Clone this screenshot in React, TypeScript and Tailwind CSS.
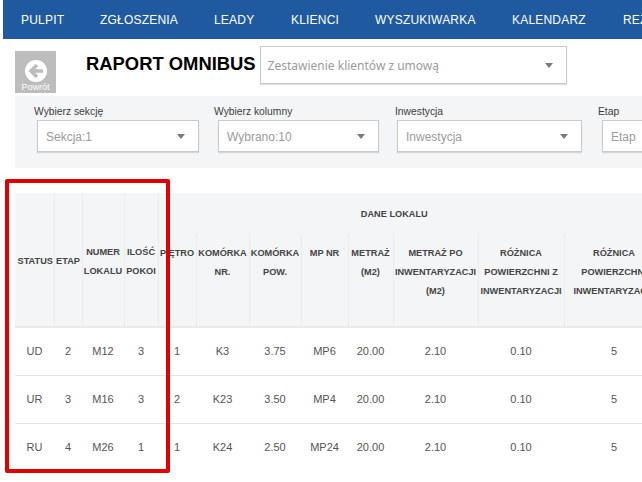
const navItems = [
  { label: "PULPIT", width: "w-[79px]" },
  { label: "ZGŁOSZENIA", width: "w-[114px]" },
  { label: "LEADY", width: "w-[77px]" },
  { label: "KLIENCI", width: "w-[84px]" },
  { label: "WYSZUKIWARKA", width: "w-[137px]" },
  { label: "KALENDARZ", width: "w-[111px]" },
  { label: "REZERWACJE", width: "w-[100px]" },
];

const columns = [39, 28, 42, 34, 38, 53, 52, 47, 45, 85, 86, 100];

const subHeaders = [
  ["PIĘTRO"],
  ["KOMÓRKA", "NR."],
  ["KOMÓRKA", "POW."],
  ["MP NR"],
  ["METRAŻ", "(M2)"],
  ["METRAŻ PO", "INWENTARYZACJI", "(M2)"],
  ["RÓŻNICA", "POWIERZCHNI Z", "INWENTARYZACJI"],
  ["RÓŻNICA", "POWIERZCHNI", "INWENTARYZACJI"],
];

const rows = [
  ["UD", "2", "M12", "3", "1", "K3", "3.75", "MP6", "20.00", "2.10", "0.10", "5"],
  ["UR", "3", "M16", "3", "2", "K23", "3.50", "MP4", "20.00", "2.10", "0.10", "5"],
  ["RU", "4", "M26", "1", "1", "K24", "2.50", "MP24", "20.00", "2.10", "0.10", "5"],
];

function Caret() {
  return (
    <svg width="8" height="5" viewBox="0 0 8 5" className="shrink-0">
      <path d="M0 0H8L4 5Z" fill="#7a7a7a" />
    </svg>
  );
}

function SelectBox({ text, className }: { text: string; className: string }) {
  return (
    <div className={`flex items-center justify-between border border-[#c9c9c9] bg-white pl-[8px] pr-[13px] pt-[1px] text-[12px] text-[#9b9b9b] shadow-[0_1px_1px_rgba(0,0,0,0.12)] ${className}`}>
      <span className="whitespace-nowrap">{text}</span>
      <Caret />
    </div>
  );
}

function Filter({ label, text, width, offset, box }: { label: string; text: string; width: string; offset: string; box: string }) {
  return (
    <div className={`shrink-0 ${width}`}>
      <div className="h-[16px] text-[10.3px] leading-[15px] text-[#3d3d3d]">{label}</div>
      <SelectBox text={text} className={`h-[32px] ${offset} ${box}`} />
    </div>
  );
}

export default function App() {
  return (
    <div className="relative h-[482px] w-[642px] overflow-hidden bg-white font-['Liberation_Sans',sans-serif]">
      {/* Top menu */}
      <nav className="ml-[3px] flex h-[39px] items-center whitespace-nowrap bg-[#1f5aa0] pl-[18px] text-[12px] tracking-[0.2px] text-white">
        {navItems.map((item) => (
          <span key={item.label} className={`shrink-0 ${item.width}`}>
            {item.label}
          </span>
        ))}
      </nav>

      {/* Title row */}
      <div className="flex h-[57px] pl-[15px]">
        <div className="mt-[12px] flex h-[42px] w-[41px] flex-col items-center bg-[#bdbdbd]">
          <svg width="22" height="22" viewBox="0 0 22 22" className="mt-[9px] shrink-0">
            <circle cx="11" cy="11" r="11" fill="#fff" />
            <path d="M18 11H7M12 5L6 11l6 6" fill="none" stroke="#bdbdbd" strokeWidth="3.6" />
          </svg>
          <span className="text-[9px] leading-[10px] text-white">Powrót</span>
        </div>
        <h1 className="ml-[30px] mt-[14px] whitespace-nowrap text-[18.4px] font-bold leading-[22px] text-black">RAPORT OMNIBUS</h1>
        <div className="ml-[4px] mt-[7px] flex h-[38px] w-[307px] items-center justify-between border border-[#c9c9c9] bg-white pl-[7px] pr-[13px] pt-[1px] font-['Noto_Sans',sans-serif] text-[12px] text-[#9b9b9b] shadow-[0_1px_1px_rgba(0,0,0,0.12)]">
          <span>Zestawienie klientów z umową</span>
          <Caret />
        </div>
      </div>

      {/* Filters */}
      <div className="ml-[15px] flex h-[72px] overflow-hidden bg-[#f4f5f7] pl-[19px] pt-[8px]">
        <Filter label="Wybierz sekcję" text="Sekcja:1" width="w-[180px]" offset="ml-[3px]" box="w-[162px]" />
        <Filter label="Wybierz kolumny" text="Wybrano:10" width="w-[181px]" offset="ml-[4px]" box="w-[161px]" />
        <Filter label="Inwestycja" text="Inwestycja" width="w-[203px]" offset="ml-[2px]" box="w-[185px]" />
        <Filter label="Etap" text="Etap" width="w-[110px]" offset="ml-[4px]" box="w-[100px]" />
      </div>

      {/* Report table */}
      <div className="ml-[15px] mt-[25px] overflow-hidden">
        <table className="w-[649px] table-fixed border-collapse text-center">
          <colgroup>
            {columns.map((w, i) => (
              <col key={i} style={{ width: w }} />
            ))}
          </colgroup>
          <thead className="bg-[#f4f5f7] text-[9.2px] font-bold leading-[19px] text-[#444]">
            <tr className="h-[41px]">
              {[["STATUS"], ["ETAP"], ["NUMER", "LOKALU"], ["ILOŚĆ", "POKOI"]].map((lines, i) => (
                <th key={lines[0]} rowSpan={2} className={i === 0 ? "whitespace-nowrap border-r border-[#ebecee] p-0 pl-[2px] pt-[4px]" : "whitespace-nowrap border-r border-[#ebecee] p-0 pt-[4px]"}>
                  {lines.map((line) => (
                    <div key={line}>{line}</div>
                  ))}
                </th>
              ))}
              <th colSpan={8} className="p-0 pr-[34px] pt-[2px]">DANE LOKALU</th>
            </tr>
            <tr className="h-[93px] border-b-2 border-[#e9eaec]">
              {subHeaders.map((lines, i) => (
                <th key={i} className="whitespace-nowrap border-r border-[#ebecee] p-0 pt-[10px] align-top">
                  {lines.map((line) => (
                    <div key={line}>{line}</div>
                  ))}
                </th>
              ))}
            </tr>
          </thead>
          <tbody className="text-[11px] text-[#555]">
            {rows.map((row, i) => (
              <tr key={row[0]} className={i < 2 ? "h-[48px] border-b border-[#e4e4e4]" : "h-[48px]"}>
                {row.map((cell, j) => (
                  <td key={j} className="p-0">{cell}</td>
                ))}
              </tr>
            ))}
          </tbody>
        </table>
      </div>

      {/* Red annotation frame */}
      <div className="absolute left-[5px] top-[179px] h-[294px] w-[165px] rounded-[2px] border-4 border-[#e30000]" />
    </div>
  );
}
